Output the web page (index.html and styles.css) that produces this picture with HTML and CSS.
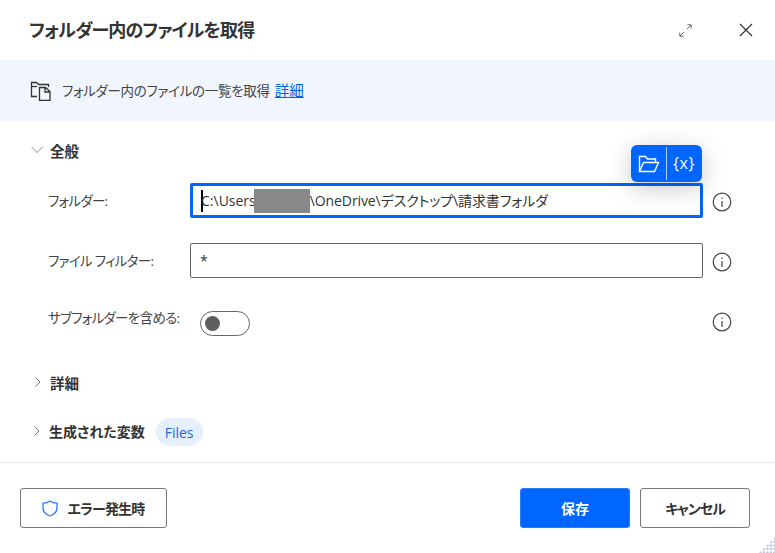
FILE: index.html
```html
<!DOCTYPE html>
<html lang="ja">
  <head>
    <meta charset="UTF-8" />
    <meta name="viewport" content="width=device-width, initial-scale=1.0" />
    <title>フォルダー内のファイルを取得</title>
    <link rel="stylesheet" href="styles.css">
  </head>
  <body>
    <div class="dialog">
      <header class="title-bar">
        <h1>フォルダー内のファイルを取得</h1>
        <div class="title-icons">
          <svg class="icon-expand" width="13" height="13" viewBox="0 0 13 13" fill="none" stroke="#666" stroke-width="1">
            <path d="M8 5 L12 1 M8.5 0.8 H12.2 V4.5 M5 8 L1 12 M0.8 8.5 V12.2 H4.5" />
          </svg>
          <svg width="14" height="14" viewBox="0 0 14 14" fill="none" stroke="#333" stroke-width="1.2">
            <path d="M1 1 L13 13 M13 1 L1 13" />
          </svg>
        </div>
      </header>

      <!-- 説明バー -->
      <div class="banner">
        <svg width="22" height="20" viewBox="0 0 22 20" fill="none" stroke="#333" stroke-width="1.3">
          <path d="M7 15.5 H1.5 V1.5 H6.5 L8.5 3.5 H18.5 V6" />
          <path d="M1.5 5.5 H7" />
          <path d="M9.5 6.5 H15.5 L20 10.5 V19.5 H9.5 Z M15 6.5 V11 H20" />
        </svg>
        <span class="banner-text">フォルダー内のファイルの一覧を取得</span>
        <a class="banner-link" href="#">詳細</a>
      </div>

      <main class="content">
        <div class="section-head section-general">
          <svg class="chevron" width="12" height="12" viewBox="0 0 12 12" fill="none" stroke="#888" stroke-width="1">
            <path d="M0.7 3 L6 8.5 L11.3 3" />
          </svg>
          <span>全般</span>
        </div>

        <div class="form-row">
          <label>フォルダー:</label>
          <div class="field field-active">
            <span class="caret"></span>
            <span>C:\Users</span><span class="redacted"></span><span class="path-rest">\OneDrive\デスクトップ\請求書フォルダ</span>
            <div class="picker">
              <svg width="22" height="18" viewBox="0 0 22 18" fill="none" stroke="#fff" stroke-width="1.4">
                <path d="M1.5 16.5 V1.5 H7.5 L9.5 4 H17.5 V7.5" />
                <path d="M1.5 16.5 L5.5 7.5 H20.5 L16.5 16.5 Z" />
              </svg>
              <span class="picker-line"></span>
              <span class="picker-var">{x}</span>
            </div>
          </div>
          <svg class="info" width="20" height="20" viewBox="0 0 20 20" fill="none" stroke="#444" stroke-width="1.2">
            <circle cx="10" cy="10" r="8.8" />
            <path d="M10 9 V15 M10 5.6 V7" />
          </svg>
        </div>

        <div class="form-row">
          <label>ファイル フィルター:</label>
          <div class="field field-filter">*</div>
          <svg class="info" width="20" height="20" viewBox="0 0 20 20" fill="none" stroke="#444" stroke-width="1.2">
            <circle cx="10" cy="10" r="8.8" />
            <path d="M10 9 V15 M10 5.6 V7" />
          </svg>
        </div>

        <div class="form-row toggle-row">
          <label>サブフォルダーを含める:</label>
          <div class="toggle-cell"><span class="toggle"><span class="knob"></span></span></div>
          <svg class="info" width="20" height="20" viewBox="0 0 20 20" fill="none" stroke="#444" stroke-width="1.2">
            <circle cx="10" cy="10" r="8.8" />
            <path d="M10 9 V15 M10 5.6 V7" />
          </svg>
        </div>

        <div class="section-head section-detail">
          <svg class="chevron" width="12" height="12" viewBox="0 0 12 12" fill="none" stroke="#777" stroke-width="1">
            <path d="M3.5 1.5 L8 6 L3.5 10.5" />
          </svg>
          <span>詳細</span>
        </div>

        <div class="section-head section-vars">
          <svg class="chevron" width="12" height="12" viewBox="0 0 12 12" fill="none" stroke="#777" stroke-width="1">
            <path d="M3.5 1.5 L8 6 L3.5 10.5" />
          </svg>
          <span class="vars-label">生成された変数</span>
          <span class="pill">Files</span>
        </div>
      </main>

      <footer class="footer">
        <button class="btn btn-error">
          <svg width="16" height="17" viewBox="0 0 16 17" fill="none" stroke="#2a7cf6" stroke-width="1.3">
            <path d="M8 1 C10 2.6 12.5 3.2 15 3.2 V8 C15 12 12 14.6 8 16 C4 14.6 1 12 1 8 V3.2 C3.5 3.2 6 2.6 8 1 Z" />
          </svg>
          エラー発生時
        </button>
        <div class="footer-right">
          <button class="btn btn-save">保存</button>
          <button class="btn btn-cancel">キャンセル</button>
        </div>
      </footer>

      <div class="grip"></div>
    </div>
  </body>
</html>
```

FILE: styles.css
```css
:root {
  --theme-color: #0066ff;
  --text-color: #333;
  --border-color: #666;
}

* {
  margin: 0;
  padding: 0;
  box-sizing: border-box;
  font-family: "Open Sans", "Noto Sans CJK JP", sans-serif;
  font-feature-settings: "palt";
}

body {
  background: white;
  color: var(--text-color);
  font-size: 14px;
  overflow: hidden;
}

.dialog {
  position: relative;
  width: 775px;
  height: 553px;
  overflow: hidden;
}

.title-bar {
  height: 60px;
  padding: 0 22px 2px 29px;
  display: flex;
  justify-content: space-between;
  align-items: center;
}

.title-bar h1 {
  font-size: 18px;
  font-weight: 600;
  letter-spacing: -0.8px;
  color: #333;
}

.title-icons {
  display: flex;
  align-items: center;
  gap: 47px;
  padding-top: 2px;
}

.banner {
  height: 61px;
  background-color: #f0f5fe;
  padding: 0 0 2px 30px;
  display: flex;
  align-items: center;
}

.banner svg {
  margin: 3px 10px 0 0;
}

.banner-text {
  font-size: 13.5px;
  letter-spacing: -0.3px;
  color: #444;
}

.banner-link {
  margin-left: 5px;
  color: #0066e0;
  font-size: 14.5px;
}

.content {
  height: 341px;
  padding-top: 19px;
}

.section-head {
  display: flex;
  align-items: center;
  height: 20px;
  padding-left: 32px;
  font-weight: 600;
  font-size: 14.5px;
  color: #333;
}

.chevron {
  margin-right: 6px;
}

.section-general {
  padding-left: 31px;
  margin-bottom: 23px;
}

.section-general .chevron {
  margin-right: 7px;
}

.section-detail {
  margin-top: 34px;
}

.section-vars {
  margin-top: 29px;
  padding-left: 31px;
}

.vars-label {
  font-size: 14px;
}

.form-row {
  height: 35px;
  margin-bottom: 25px;
  padding-left: 48px;
  display: flex;
  align-items: center;
}

.form-row label {
  width: 142px;
  font-size: 13.5px;
  letter-spacing: -0.7px;
  color: #444;
  padding-bottom: 2px;
}

.field {
  position: relative;
  width: 513px;
  height: 35px;
  border: 1px solid var(--border-color);
  border-radius: 2px;
  padding: 0 10px 2px;
  display: flex;
  align-items: center;
  font-size: 14px;
  color: #333;
}

.field-filter {
  padding: 0 9px;
}

.field-active {
  border: 3px solid var(--theme-color);
  padding: 0 8px;
}

.caret {
  width: 2px;
  height: 22px;
  margin-right: -2px;
  background: black;
}

.redacted {
  width: 56px;
  height: 24px;
  margin-left: -2px;
  background: #888;
}

.path-rest {
  letter-spacing: -0.1px;
  padding-bottom: 2px;
}

.picker {
  position: absolute;
  top: -41px;
  right: -2px;
  width: 71px;
  height: 37px;
  background-color: var(--theme-color);
  border-radius: 6px;
  box-shadow: 0 6px 24px rgba(0, 0, 0, 0.22);
  padding-left: 7px;
  display: flex;
  align-items: center;
  color: white;
}

.picker-line {
  width: 1px;
  height: 33px;
  margin: 0 6px;
  background: rgba(255, 255, 255, 0.7);
}

.picker-var {
  font-size: 16px;
  letter-spacing: 0.6px;
  padding-bottom: 2px;
}

.info {
  margin: 2px 0 0 9px;
}

.toggle-row label {
  align-self: flex-start;
  padding: 4px 0 0;
}

.toggle-cell {
  width: 513px;
  padding: 5px 0 0 10px;
}

.toggle {
  width: 50px;
  height: 25px;
  border: 1.4px solid var(--border-color);
  border-radius: 13px;
  display: flex;
  align-items: center;
  padding-left: 4px;
}

.knob {
  width: 15px;
  height: 15px;
  border-radius: 50%;
  background: #605e5c;
}

.pill {
  margin: 2px 0 0 11px;
  height: 28px;
  padding: 0 9px;
  border-radius: 14px;
  background: #e5effe;
  color: #1a66e8;
  font-weight: 400;
  font-size: 14px;
  display: flex;
  align-items: center;
}

.footer {
  height: 91px;
  border-top: 1px solid #e8e8e8;
  padding: 25px 25px 0 20px;
  display: flex;
  justify-content: space-between;
  align-items: flex-start;
}

.footer-right {
  display: flex;
  gap: 10px;
}

.btn {
  height: 40px;
  border: 1px solid #777;
  border-radius: 3px;
  background: white;
  color: #333;
  font-size: 14px;
  font-weight: 600;
  display: flex;
  align-items: center;
  justify-content: center;
  cursor: pointer;
}

.btn-error {
  width: 147px;
  gap: 9px;
  letter-spacing: -0.8px;
}

.btn-save {
  width: 110px;
  background-color: var(--theme-color);
  border-color: #2a7cf6;
  color: white;
}

.btn-cancel {
  width: 110px;
  letter-spacing: -1px;
}

.grip {
  position: absolute;
  right: 0;
  bottom: 0;
  width: 16px;
  height: 16px;
  background-image: radial-gradient(circle at 1.5px 1.5px, #c3cbdb 1.2px, transparent 1.4px);
  background-size: 3.5px 3.5px;
  clip-path: polygon(100% 0, 100% 100%, 0 100%);
}
```
